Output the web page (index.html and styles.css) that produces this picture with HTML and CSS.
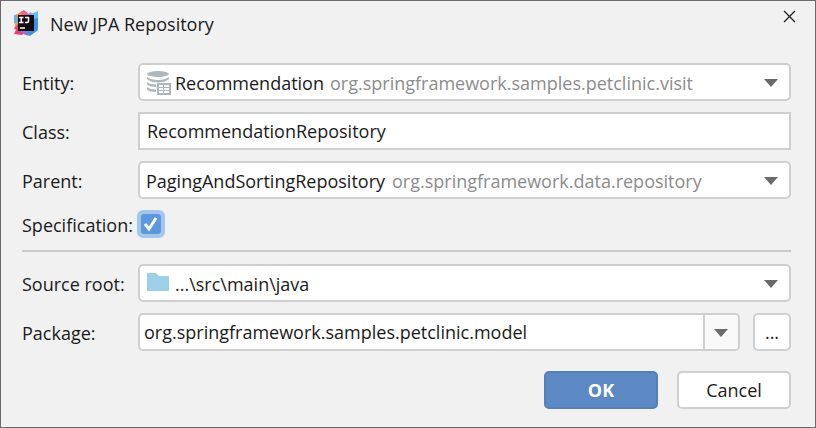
FILE: index.html
```html
<!DOCTYPE html>
<html lang="en">
<head>
<meta charset="utf-8">
<meta name="viewport" content="width=device-width, initial-scale=1">
<title>New JPA Repository</title>
<link rel="stylesheet" href="styles.css">
</head>
<body>
<main class="dialog">
  <header class="titlebar">
    <svg class="logo" viewBox="0 0 26 26" aria-hidden="true">
      <path d="M1 12 6 10 6 16 3 18z" fill="#f9a03c"/>
      <path d="M1 5 6 4 7 12 1 13z" fill="#6aaeea"/>
      <path d="M3 5 9 1 13 5 8 9 4 8z" fill="#f98b3a"/>
      <path d="M8 2 11 0 16 4 13 6 9 5z" fill="#f2609c"/>
      <path d="M14 5 18 2 20 6z" fill="#a88be6"/>
      <path d="M18 4 25 1 25 10 20 12z" fill="#5cc4f0"/>
      <path d="M20 9 25 8 25 20 17 26 11 22 20 19z" fill="#3f92e6"/>
      <path d="M1 18 5 14 6 20 14 21 9 25 1 24 3 20z" fill="#ee3f74"/>
      <path d="M8 21 13 21 16 26 10 24z" fill="#8d74d8"/>
      <path d="M5 5H21V21H5z" fill="#130c12"/>
      <path d="M6 7.500H10.500M8.250 7.500V12.500M6 12.500H10.500M12 7.500H15.500V11Q15.500 12.500 14 12.500H12M7 18H12" fill="none" stroke="#fff" stroke-width="1.500"/>
    </svg>
    <h1 class="title">New JPA Repository</h1>
    <button class="close" type="button" aria-label="Close">
      <svg viewBox="0 0 12 12" aria-hidden="true"><path d="M1 1 11 11M11 1 1 11" fill="none" stroke="#222" stroke-width="1.2"/></svg>
    </button>
  </header>

  <form class="form">
    <div class="row">
      <label class="label" for="entity">Entity:</label>
      <div class="box combo">
        <svg class="icon" viewBox="0 0 26 26" aria-hidden="true">
          <g fill="#afb7bd">
            <ellipse cx="12" cy="4" rx="11" ry="3"/>
            <path d="M1 7Q5 10 12 10T23 7V9Q19 12.500 12 12.500T1 9z"/>
            <path d="M1 12Q4 14.500 10 14.500V17Q4 17 1 14.500z"/>
            <path d="M1 17Q4 19.500 10 19.500V22Q3 22 1 19.500z"/>
            <path fill-rule="evenodd" d="M11 13H25V25H11zM13 15V17H17V15zM18 15V17H23V15zM13 18V20H17V18zM18 18V20H23V18zM13 21V23H17V21zM18 21V23H23V21z"/>
          </g>
        </svg>
        <select class="select" id="entity"><option>Recommendation</option></select>
        <label class="hint" for="entity">org.springframework.samples.petclinic.visit</label>
        <svg class="arrow" viewBox="0 0 14 8" aria-hidden="true"><path d="M0 0H14L7 8z"/></svg>
      </div>
    </div>

    <div class="row">
      <label class="label" for="class">Class:</label>
      <input class="box text" id="class" type="text" value="RecommendationRepository">
    </div>

    <div class="row">
      <label class="label" for="parent">Parent:</label>
      <div class="box combo">
        <select class="select" id="parent"><option>PagingAndSortingRepository</option></select>
        <label class="hint" for="parent">org.springframework.data.repository</label>
        <svg class="arrow" viewBox="0 0 14 8" aria-hidden="true"><path d="M0 0H14L7 8z"/></svg>
      </div>
    </div>

    <div class="row">
      <label class="label" for="specification">Specification:</label>
      <span class="check">
        <input class="check-input" id="specification" type="checkbox" checked>
        <svg class="check-mark" viewBox="0 0 20 20" aria-hidden="true"><path d="M4 10 8 15 15 4" fill="none" stroke="#fff" stroke-width="3"/></svg>
      </span>
    </div>

    <hr class="divider">

    <div class="row">
      <label class="label" for="source">Source root:</label>
      <div class="box combo">
        <svg class="icon" viewBox="0 0 26 26" aria-hidden="true"><path d="M1 2H10L13 5H23V20H1z" fill="#9ccfe8"/></svg>
        <select class="select" id="source"><option>...\src\main\java</option></select>
        <svg class="arrow" viewBox="0 0 14 8" aria-hidden="true"><path d="M0 0H14L7 8z"/></svg>
      </div>
    </div>

    <div class="row">
      <label class="label" for="package">Package:</label>
      <div class="package">
        <div class="box editable">
          <input class="editable-input" id="package" type="text" value="org.springframework.samples.petclinic.model">
          <button class="editable-toggle" type="button" aria-label="Show packages">
            <svg class="arrow" viewBox="0 0 14 8" aria-hidden="true"><path d="M0 0H14L7 8z"/></svg>
          </button>
        </div>
        <button class="box browse" type="button">...</button>
      </div>
    </div>

    <footer class="actions">
      <button class="box action primary" type="submit">OK</button>
      <button class="box action" type="button">Cancel</button>
    </footer>
  </form>
</main>
</body>
</html>
```
FILE: styles.css
```css
* {
  box-sizing: border-box;
}

body {
  margin: 0;
  background: #f1f1f1;
  color: #1a1a1a;
  font: 18px/24px "Open Sans", "Noto Sans", sans-serif;
}

input,
select,
button {
  margin: 0;
  padding: 0;
  border: 0;
  background: none;
  color: inherit;
  font: inherit;
}

.dialog {
  min-height: 100vh;
  border: 1px solid #6c696c;
  background: #f1f1f1;
}

.titlebar {
  display: flex;
  align-items: flex-start;
  padding: 9px 19px 0 12px;
}

.logo {
  width: 26px;
  height: 26px;
}

.title {
  flex: 1;
  margin: 2px 0 0 11px;
  font-size: 18px;
  font-weight: 400;
}

.close {
  display: flex;
  padding: 0;
}

.close svg {
  width: 13px;
  height: 13px;
}

.form {
  display: flex;
  flex-direction: column;
  gap: 11px;
  padding: 27px 24px 18px 21px;
}

.row {
  display: grid;
  grid-template-columns: 116px minmax(0, 1fr);
  align-items: center;
}

.label {
  padding-top: 2px;
  white-space: nowrap;
}

.box {
  height: 38px;
  border: 2px solid #cfcfcf;
  border-radius: 5px;
  background: #fff;
}

.combo {
  display: flex;
  align-items: center;
  padding: 2px 11px 0 6px;
}

.icon {
  width: 26px;
  height: 26px;
  margin-right: 3px;
}

.select {
  appearance: none;
}

.hint {
  margin-left: 6px;
  color: #8c8c8c;
  white-space: nowrap;
}

.arrow {
  flex: none;
  width: 14px;
  height: 8px;
  margin-left: auto;
  fill: #6a6a6a;
}

.text {
  width: 100%;
  padding: 0 7px;
  border-radius: 0;
}

.check {
  display: grid;
  width: 26px;
  height: 28px;
  place-items: center;
}

.check > * {
  grid-area: 1 / 1;
}

.check-input {
  appearance: none;
  width: 20px;
  height: 20px;
  border-radius: 2px;
  background: #5b98dc;
  outline: 4px solid #a5c5ef;
}

.check-mark {
  z-index: 1;
  width: 20px;
  height: 20px;
  pointer-events: none;
}

.divider {
  width: 100%;
  height: 2px;
  margin: 1px 0;
  border: 0;
  background: #cacaca;
}

.package {
  display: flex;
  gap: 13px;
}

.editable {
  display: flex;
  flex: 1;
  overflow: hidden;
}

.editable-input {
  flex: 1;
  min-width: 0;
  padding: 0 4px;
}

.editable-toggle {
  display: flex;
  width: 35px;
  align-items: center;
  padding: 2px 10px 0 0;
  border-left: 2px solid #cfcfcf;
  background: #f9f9f9;
}

.browse {
  width: 38px;
}

.actions {
  display: flex;
  justify-content: flex-end;
  gap: 19px;
  margin-top: 9px;
}

.action {
  width: 114px;
}

.primary {
  border-color: #5380ba;
  background: #5c88c4;
  color: #fff;
  font-weight: 700;
}
```
